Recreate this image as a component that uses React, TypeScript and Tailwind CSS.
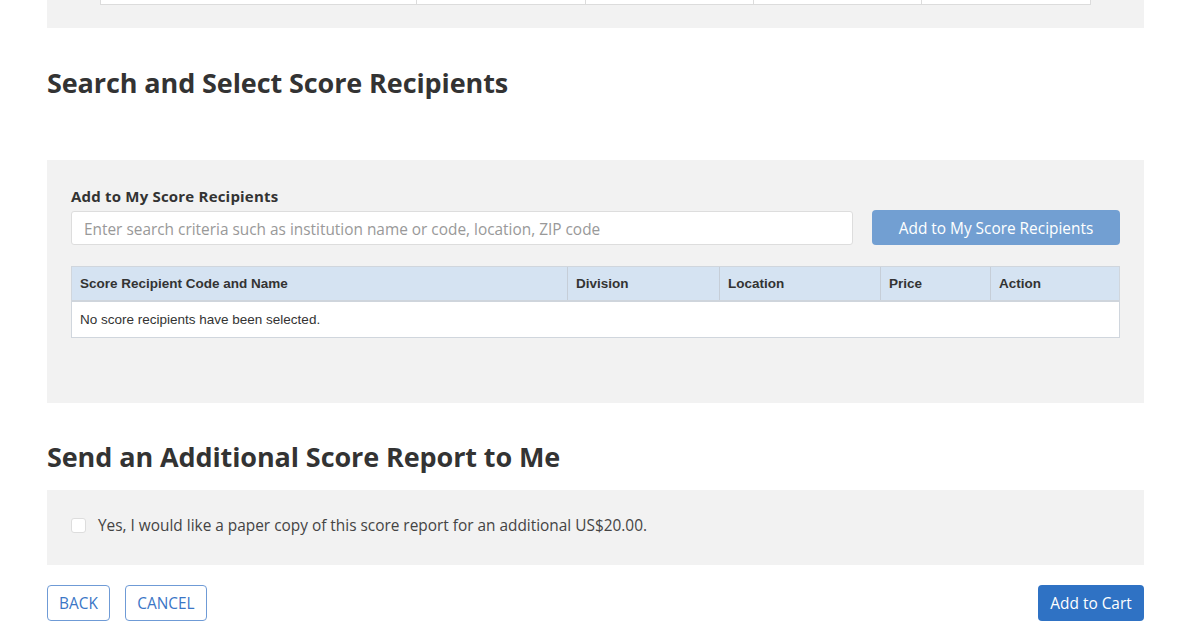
import React from 'react';

const columns = [
  { label: 'Score Recipient Code and Name', width: 'w-[496px]' },
  { label: 'Division', width: 'w-[152px]' },
  { label: 'Location', width: 'w-[161px]' },
  { label: 'Price', width: 'w-[110px]' },
  { label: 'Action', width: 'flex-1' },
];

const App = () => {
  return (
    <div className="w-full min-h-[641px] bg-white font-['Open_Sans',sans-serif] text-[#333]">
      <div className="ml-[47px] w-[1097px]">
        {/* Previous section, cut off at the top */}
        <div className="h-[28px] bg-[#f2f2f2] px-[53px]">
          <div className="flex h-[5px] border-x border-b border-[#dcdcdc] bg-white">
            <div className="w-[316px] border-r border-[#dcdcdc]" />
            <div className="w-[169px] border-r border-[#dcdcdc]" />
            <div className="w-[168px] border-r border-[#dcdcdc]" />
            <div className="w-[168px] border-r border-[#dcdcdc]" />
            <div className="flex-1" />
          </div>
        </div>

        {/* Search and Select */}
        <h2 className="pt-[35px] pb-[57px] text-[27px] leading-[40px] font-bold tracking-[-0.1px]">
          Search and Select Score Recipients
        </h2>

        <div className="h-[243px] bg-[#f2f2f2] px-[24px] pt-[26px]">
          <label className="block text-[15px] leading-[20px] font-bold tracking-[0.2px]">
            Add to My Score Recipients
          </label>
          <div className="mt-[4px] flex items-start gap-[19px]">
            <input
              type="text"
              placeholder="Enter search criteria such as institution name or code, location, ZIP code"
              className="mt-[1px] h-[34px] w-[782px] rounded-[3px] border border-[#dddddd] bg-white px-[12px] pt-[2px] text-[15.4px] placeholder:text-[#999]"
            />
            <button className="h-[35px] flex-1 rounded-[4px] bg-[#729fd2] pt-[2px] text-[15.4px] text-white">
              Add to My Score Recipients
            </button>
          </div>

          <div className="mt-[21px] border border-[#d0d6dd] font-['Liberation_Sans',Arial,sans-serif] text-[13.5px]">
            <div className="flex h-[35px] border-b-2 border-[#cfd5dc] bg-[#d5e3f2] font-bold">
              {columns.map((col, idx) => (
                <div
                  key={col.label}
                  className={`${col.width} flex items-center px-[8px] pt-[1px] ${idx < columns.length - 1 ? 'border-r border-[#c6ced8]' : ''}`}
                >
                  {col.label}
                </div>
              ))}
            </div>
            <div className="flex h-[35px] items-center bg-white px-[8px] pt-[1px]">
              No score recipients have been selected.
            </div>
          </div>
        </div>

        {/* Additional Score Report */}
        <h2 className="pt-[34px] pb-[13px] text-[27px] leading-[40px] font-bold tracking-[-0.1px]">
          Send an Additional Score Report to Me
        </h2>

        <div className="flex h-[75px] items-center gap-[12px] bg-[#f2f2f2] px-[24px] pb-[5px]">
          <span className="h-[15px] w-[15px] rounded-[3px] border border-[#dddddd] bg-white" />
          <span className="pt-[2px] text-[15.4px] text-[#444]">
            Yes, I would like a paper copy of this score report for an additional US$20.00.
          </span>
        </div>

        {/* Buttons */}
        <div className="mt-[20px] flex items-center">
          <button className="h-[36px] w-[63px] rounded-[4px] border border-[#6f9bd6] pt-[2px] text-[15.4px] text-[#3b76c6]">
            BACK
          </button>
          <button className="ml-[15px] h-[36px] w-[82px] rounded-[4px] border border-[#6f9bd6] pt-[2px] text-[15.4px] text-[#3b76c6]">
            CANCEL
          </button>
          <button className="ml-auto h-[36px] w-[106px] rounded-[4px] bg-[#2f72c4] pt-[2px] text-[15.4px] text-white">
            Add to Cart
          </button>
        </div>
      </div>
    </div>
  );
};

export default App;
